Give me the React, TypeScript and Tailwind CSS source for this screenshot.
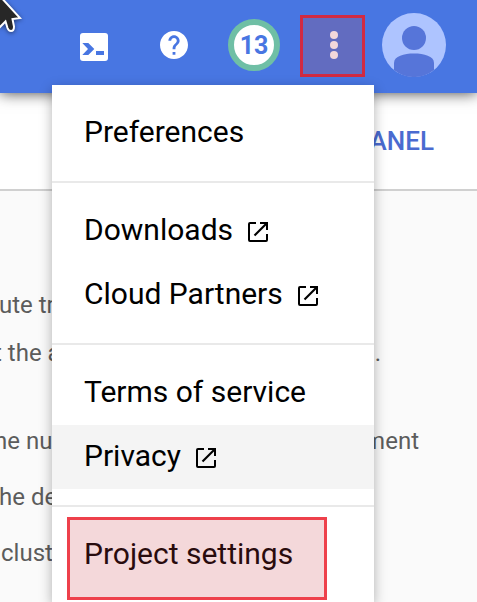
import React from "react";

function OpenIcon() {
  return (
    <svg className="ml-[15px] mt-1.5 shrink-0" width="20" height="20" viewBox="0 0 20 20" fill="none" stroke="#000" strokeWidth="2">
      <path d="M8 1H2Q1 1 1 2V18Q1 19 2 19H18Q19 19 19 18V12" />
      <path d="M12 1H19V8" />
      <path d="M18.5 1.5L6.500 13.500" strokeWidth="2.2" />
    </svg>
  );
}

function Item({ label, external = false, active = false }: { label: string; external?: boolean; active?: boolean }) {
  return (
    <div className={"flex h-16 items-center pl-8 pb-1 text-[30px] whitespace-nowrap text-black " + (active ? "bg-[#f4f4f4]" : "")}>
      <span>{label}</span>
      {external && <OpenIcon />}
    </div>
  );
}

function Divider() {
  return <div className="my-4 h-0.5 bg-[#e9e9e9]" />;
}

function Header() {
  return (
    <header className="relative flex h-[93px] items-start bg-[#4876e2] shadow-[0_0_14px_rgba(0,0,0,0.75)]">
      <svg className="mt-[33px] ml-20" width="28" height="28" viewBox="0 0 28 28">
        <rect width="28" height="28" rx="3" fill="#fff" />
        <path d="M2.3 10H8.300L14.300 16L8.300 22H2.300L8 16ZM16 18H24V22H16Z" fill="#4876e2" />
      </svg>
      <svg className="mt-[31px] ml-[52px]" width="28" height="28" viewBox="2 2 20 20" fill="#fff">
        <path d="M12 2C6.48 2 2 6.48 2 12s4.480 10 10 10 10-4.480 10-10S17.520 2 12 2zm1 17h-2v-2h2v2zm2.070-7.750l-.9.920C13.450 12.900 13 13.500 13 15h-2v-.5c0-1.100.45-2.100 1.170-2.830l1.240-1.260c.37-.36.590-.86.590-1.410 0-1.100-.9-2-2-2s-2 .9-2 2H8c0-2.210 1.790-4 4-4s4 1.790 4 4c0 .88-.36 1.680-.93 2.250z" />
      </svg>
      <div className="mt-[19px] ml-10 flex size-[52px] items-center justify-center rounded-full border-[6.5px] border-[#6fbfa5] bg-white pt-0.5 text-[25px] font-bold text-[#4876e2]">
        13
      </div>
      <div className="mt-[15px] ml-5 flex h-[62px] w-[65px] flex-col items-center gap-0.5 border-[3px] border-[#d12a42] bg-[#626cc0] pt-[13px] pl-[3px]">
        <i className="size-2 rounded-full bg-[#f3d8da]" />
        <i className="size-2 rounded-full bg-[#f3d8da]" />
        <i className="size-2 rounded-full bg-[#f3d8da]" />
      </div>
      <svg className="mt-[13px] ml-[17px]" width="64" height="64" viewBox="0 0 64 64">
        <circle cx="32" cy="32" r="32" fill="#aec4ff" />
        <circle cx="32" cy="25" r="12" fill="#5675d9" />
        <path d="M12 57V50C12 43 22 40.500 32 40.500S52 43 52 50V57A32 32 0 0 1 12 57Z" fill="#5675d9" />
      </svg>
      <svg className="absolute top-0 left-0 drop-shadow-[0_1px_2px_rgba(0,0,0,0.5)]" width="26" height="36" viewBox="0 0 26 36">
        <path d="M-8 -12.500L20 18L12.500 19L14 26.500Q14 31 11 31Q8.500 31 7.500 28L5.500 21.500L-3 30Z" fill="#272727" stroke="#fff" strokeWidth="2" />
      </svg>
    </header>
  );
}

export default function App() {
  return (
    <div className="flex h-[602px] w-[477px] flex-col overflow-hidden bg-[#fafafa] font-['Roboto',sans-serif]">
      <div className="relative z-10">
        <Header />
      </div>
      <div className="flex h-[98px] shrink-0 items-center justify-end border-b-2 border-[#d0d0d0] bg-white pr-[43px] text-[26px] font-medium text-[#4a6bd0]">
        PANEL
      </div>
      <main className="flex flex-col pt-[90px] text-[24px] leading-[48px] whitespace-pre text-[#5c5c5c]">
        <p className="-ml-px">ute tr</p>
        <div className="-ml-1.5 flex justify-between pr-24"><span>t the a</span><span>.</span></div>
        <div className="mt-10 -ml-1.5 flex justify-between pr-[58px]"><span>he num</span><span>ment</span></div>
        <p className="mt-2 -ml-px">he de</p>
        <p className="mt-2 ml-px">clust</p>
      </main>
      <nav className="absolute top-[85px] left-[52px] z-20 h-[517px] w-[322px] overflow-clip bg-white pt-4 shadow-[0_4px_12px_rgba(0,0,0,0.3)]">
        <Item label="Preferences" />
        <Divider />
        <Item label="Downloads" external />
        <Item label="Cloud Partners" external />
        <Divider />
        <Item label="Terms of service" />
        <Item label="Privacy" external active />
        <Divider />
        <Item label="Project settings" />
        <div className="absolute top-[432px] left-[15px] h-[83px] w-[260px] border-[3px] border-[#ee404b] bg-[#c83c46]/20" />
      </nav>
    </div>
  );
}
